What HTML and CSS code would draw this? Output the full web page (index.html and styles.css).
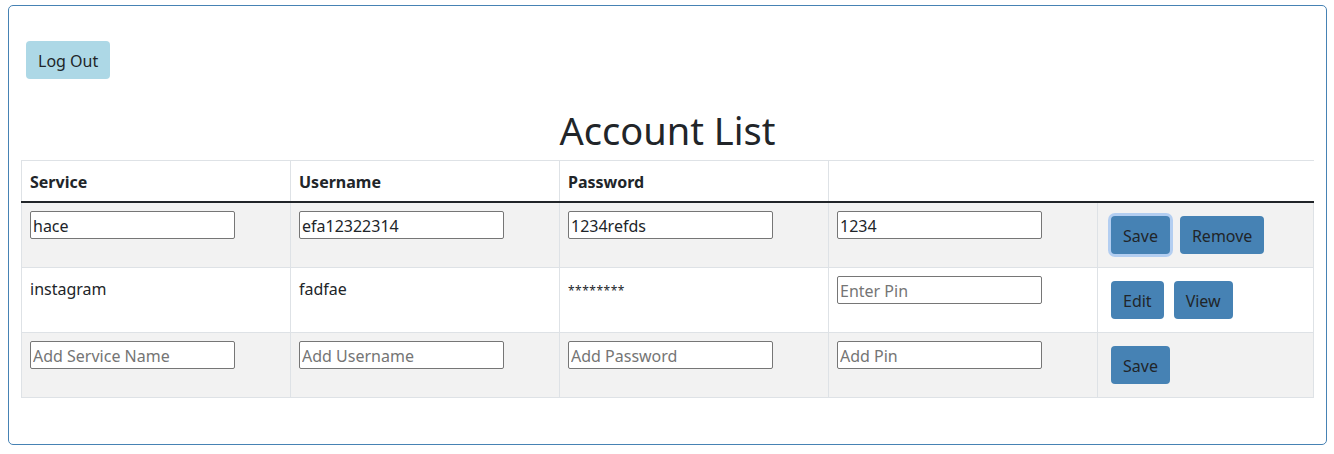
FILE: index.html
```html
<!DOCTYPE html>
<html lang="en">
<head>
<meta charset="utf-8">
<title>Account List</title>
<link rel="stylesheet" href="styles.css">
</head>
<body>
<div class="card">
  <div class="toolbar">
    <button class="btn btn-logout">Log Out</button>
  </div>
  <h1 class="title">Account List</h1>
  <table class="accounts">
    <colgroup>
      <col class="col-main"><col class="col-main"><col class="col-main"><col class="col-main"><col>
    </colgroup>
    <thead>
      <tr>
        <th>Service</th>
        <th>Username</th>
        <th>Password</th>
        <th class="th-last" colspan="2"></th>
      </tr>
    </thead>
    <tbody>
      <tr>
        <td><input class="field" type="text" value="hace"></td>
        <td><input class="field" type="text" value="efa12322314"></td>
        <td><input class="field" type="text" value="1234refds"></td>
        <td><input class="field" type="text" value="1234"></td>
        <td><div class="actions"><button class="btn btn-primary focused">Save</button><button class="btn btn-primary">Remove</button></div></td>
      </tr>
      <tr>
        <td class="text-cell">instagram</td>
        <td class="text-cell">fadfae</td>
        <td class="text-cell"><span class="masked">********</span></td>
        <td><input class="field" type="text" placeholder="Enter Pin"></td>
        <td><div class="actions"><button class="btn btn-primary">Edit</button><button class="btn btn-primary">View</button></div></td>
      </tr>
      <tr>
        <td><input class="field" type="text" placeholder="Add Service Name"></td>
        <td><input class="field" type="text" placeholder="Add Username"></td>
        <td><input class="field" type="text" placeholder="Add Password"></td>
        <td><input class="field" type="text" placeholder="Add Pin"></td>
        <td><div class="actions"><button class="btn btn-primary">Save</button></div></td>
      </tr>
    </tbody>
  </table>
</div>
</body>
</html>
```
FILE: styles.css
```css
* { box-sizing: border-box; }

html, body {
  margin: 0;
  padding: 0;
  background: #ffffff;
}

body {
  font-family: "Noto Sans", "Open Sans", sans-serif;
  font-size: 16px;
  line-height: 24px;
  color: #212529;
}

.card {
  margin: 5px 7px 0 8px;
  height: 440px;
  border: 1px solid #4682b4;
  border-radius: 5px;
  padding: 12px;
}

.toolbar {
  padding-top: 18px;
  display: flex;
}

.btn {
  font-family: inherit;
  font-size: 16px;
  line-height: 24px;
  padding: 8px 12px 6px;
  margin: 5px;
  border: none;
  border-radius: 4px;
  color: #212529;
  cursor: pointer;
}

.btn-logout {
  background: #add8e6;
}

.btn-primary {
  background: #4682b4;
}

.focused {
  box-shadow: 0 0 0 3px #b3cef1;
}

.title {
  margin: 22px 0 6px;
  font-size: 38px;
  line-height: 48px;
  font-weight: 400;
  text-align: center;
}

.accounts {
  width: 100%;
  border-collapse: collapse;
  table-layout: fixed;
}

.col-main { width: 269px; }

.accounts th,
.accounts td {
  padding: 8px;
  border: 1px solid #dee2e6;
  text-align: left;
  vertical-align: top;
}

.accounts th {
  padding: 9px 8px 7px;
  font-weight: 700;
  border-bottom: 2px solid #212529;
}

.accounts td.text-cell {
  padding: 9px 8px 7px;
}

.masked {
  font-size: 12px;
  letter-spacing: 0.5px;
}

.accounts th.th-last {
  border-right: 0;
}

.accounts tbody tr:nth-child(odd) {
  background: #f2f2f2;
}

.field {
  width: 205px;
  height: 28px;
  padding: 2px 2px 0;
  border: 1px solid #767676;
  border-radius: 2px;
  font-family: inherit;
  font-size: 16px;
  color: #212529;
  background: #ffffff;
}

.field::placeholder {
  color: #757575;
}

.actions {
  display: flex;
}
```
